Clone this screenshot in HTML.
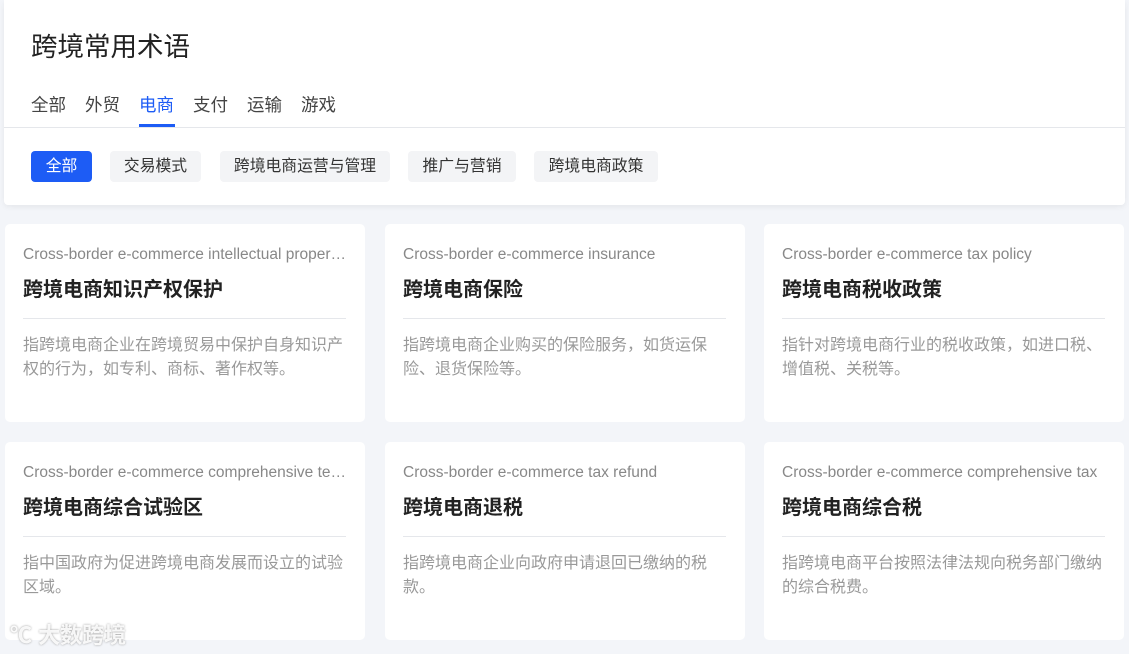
<!DOCTYPE html>
<html><head><meta charset="utf-8"><style>
*{margin:0;padding:0;box-sizing:border-box}
body{width:1129px;height:654px;overflow:hidden;background:#f3f5f9;font-family:"Liberation Sans","Noto Sans CJK SC",sans-serif;position:relative}
.hd{position:absolute;left:4px;top:0;width:1121px;height:205px;background:#fff;border-radius:0 0 4px 4px;box-shadow:0 2px 6px rgba(0,0,0,.06)}
.t{position:absolute;left:27px;top:25px;font-size:26.5px;color:#222}
.tabs{position:absolute;left:27px;top:92px;font-size:17.5px;color:#444}
.tabs span{position:absolute;white-space:nowrap}
.tabs .a{color:#1d5cf5}
.ul{position:absolute;left:135px;top:124px;width:36px;height:3px;background:#1d5cf5}
.dv{position:absolute;left:0;top:127px;width:1121px;height:1px;background:#e5e7eb}
.chip{position:absolute;top:151px;height:31px;line-height:31px;font-size:15.8px;color:#333;background:#f3f4f6;border-radius:4px;text-align:center}
.chip.on{background:#1d5cf5;color:#fff}
.c{position:absolute;width:360px;height:198px;background:#fff;border-radius:5px}
.c .e{position:absolute;left:18px;top:22px;width:324px;font-size:15.5px;color:#888;white-space:nowrap;overflow:hidden;text-overflow:ellipsis}
.c .n{position:absolute;left:18px;top:49px;font-size:20px;font-weight:bold;color:#222}
.c .l{position:absolute;left:18px;top:94px;width:323px;height:1px;background:#e5e7eb}
.c .d{position:absolute;left:18px;top:110px;width:324px;font-size:16px;line-height:24px;color:#999}
.wm{position:absolute;left:10px;top:618px;font-size:22px;font-weight:bold;color:rgba(255,255,255,.9);text-shadow:0 0 2px #999}
</style></head><body>
<div class="hd">
<div class="t">跨境常用术语</div>
<div class="tabs"><span style="left:0">全部</span><span style="left:54px">外贸</span><span class="a" style="left:108px">电商</span><span style="left:162px">支付</span><span style="left:216px">运输</span><span style="left:270px">游戏</span></div>
<div class="ul"></div><div class="dv"></div>
<div class="chip on" style="left:27px;width:61px">全部</div>
<div class="chip" style="left:106px;width:91px">交易模式</div>
<div class="chip" style="left:216px;width:170px">跨境电商运营与管理</div>
<div class="chip" style="left:404px;width:108px">推广与营销</div>
<div class="chip" style="left:530px;width:124px">跨境电商政策</div>
</div>
<div class="c" style="left:5px;top:224px"><div class="e">Cross-border e-commerce intellectual property protection</div><div class="n">跨境电商知识产权保护</div><div class="l"></div><div class="d">指跨境电商企业在跨境贸易中保护自身知识产权的行为，如专利、商标、著作权等。</div></div>
<div class="c" style="left:385px;top:224px"><div class="e">Cross-border e-commerce insurance</div><div class="n">跨境电商保险</div><div class="l"></div><div class="d">指跨境电商企业购买的保险服务，如货运保险、退货保险等。</div></div>
<div class="c" style="left:764px;top:224px"><div class="e">Cross-border e-commerce tax policy</div><div class="n">跨境电商税收政策</div><div class="l"></div><div class="d">指针对跨境电商行业的税收政策，如进口税、增值税、关税等。</div></div>
<div class="c" style="left:5px;top:442px"><div class="e">Cross-border e-commerce comprehensive test zone</div><div class="n">跨境电商综合试验区</div><div class="l"></div><div class="d">指中国政府为促进跨境电商发展而设立的试验区域。</div></div>
<div class="c" style="left:385px;top:442px"><div class="e">Cross-border e-commerce tax refund</div><div class="n">跨境电商退税</div><div class="l"></div><div class="d">指跨境电商企业向政府申请退回已缴纳的税款。</div></div>
<div class="c" style="left:764px;top:442px"><div class="e">Cross-border e-commerce comprehensive tax</div><div class="n">跨境电商综合税</div><div class="l"></div><div class="d">指跨境电商平台按照法律法规向税务部门缴纳的综合税费。</div></div>
<div class="wm">℃ 大数跨境</div>
</body></html>
